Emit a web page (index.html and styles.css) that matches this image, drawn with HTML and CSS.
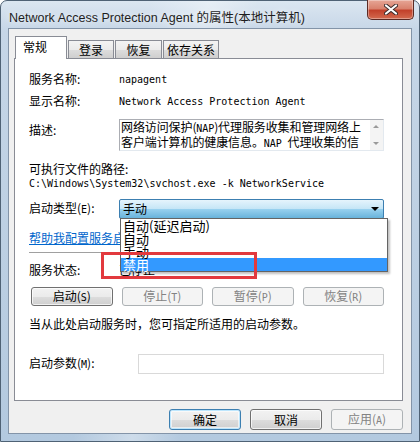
FILE: index.html
```html
<!DOCTYPE html>
<html lang="zh-CN">
<head>
  <meta charset="UTF-8">
  <title>Network Access Protection Agent 的属性(本地计算机)</title>
  <link rel="stylesheet" href="styles.css">
</head>
<body>
  <div class="window">
    <div class="titlebar">
      <span class="title">Network Access Protection Agent 的属性(本地计算机)</span>
      <div class="close">
        <svg width="14" height="11" viewBox="0 0 14 11">
          <path d="M2 1.5 L12 9.5 M12 1.5 L2 9.5" stroke="#3a2a2a" stroke-width="4" stroke-linecap="round"/>
          <path d="M2 1.5 L12 9.5 M12 1.5 L2 9.5" stroke="#ffffff" stroke-width="2.2" stroke-linecap="round"/>
        </svg>
      </div>
    </div>

    <div class="client">
      <div class="tabs">
        <div class="tab active">常规</div>
        <div class="tab">登录</div>
        <div class="tab">恢复</div>
        <div class="tab">依存关系</div>
      </div>

      <div class="panel">
        <div class="row r-name">
          <span class="label">服务名称:</span>
          <span class="mono">napagent</span>
        </div>
        <div class="row r-display">
          <span class="label">显示名称:</span>
          <span class="mono">Network Access Protection Agent</span>
        </div>
        <div class="row r-desc">
          <span class="label">描述:</span>
          <div class="memo">
            <div class="memo-text">
              <div>网络访问保护(<span class="mono">NAP</span>)代理服务收集和管理网络上</div>
              <div>客户端计算机的健康信息。<span class="mono">NAP </span>代理收集的信</div>
            </div>
            <div class="memo-scroll">
              <span class="arrow up"></span>
              <span class="arrow down"></span>
            </div>
          </div>
        </div>
        <div class="line r-pathlabel">可执行文件的路径:</div>
        <div class="line mono r-path">C:\Windows\System32\svchost.exe -k NetworkService</div>

        <div class="row r-type">
          <span class="label">启动类型(<span class="mono">E</span>):</span>
          <div class="combo">
            <span class="combo-value">手动</span>
            <span class="combo-arrow"></span>
            <ul class="droplist">
              <li>自动(延迟启动)</li>
              <li>自动</li>
              <li>手动</li>
              <li class="selected">禁用</li>
            </ul>
          </div>
        </div>

        <div class="line r-link"><a href="#" class="link">帮助我配置服务启动选项。</a></div>
        <div class="separator"></div>

        <div class="row r-status">
          <span class="label">服务状态:</span>
          <span class="status">已停止</span>
        </div>

        <div class="actions">
          <button class="btn">启动(<span class="mono">S</span>)</button>
          <button class="btn" disabled>停止(<span class="mono">T</span>)</button>
          <button class="btn" disabled>暂停(<span class="mono">P</span>)</button>
          <button class="btn" disabled>恢复(<span class="mono">R</span>)</button>
        </div>

        <div class="line r-hint">当从此处启动服务时，您可指定所适用的启动参数。</div>

        <div class="row r-params">
          <span class="label wide">启动参数(<span class="mono">M</span>):</span>
          <div class="field" aria-disabled="true"></div>
        </div>

        <div class="marker"></div>
      </div>

      <div class="footer">
        <button class="btn default">确定</button>
        <button class="btn">取消</button>
        <button class="btn" disabled>应用(<span class="mono">A</span>)</button>
      </div>
    </div>
  </div>
</body>
</html>
```

FILE: styles.css
```css
* {
  box-sizing: border-box;
}

body {
  margin: 0;
  width: 420px;
  height: 442px;
  overflow: hidden;
  font-family: "Noto Sans CJK SC", "Noto Sans", sans-serif;
  font-size: 12px;
  color: #000;
}

.mono {
  font-family: "DejaVu Sans Mono", "Liberation Mono", monospace;
  font-size: 10px;
}

/* Aero frame */
.window {
  width: 420px;
  height: 442px;
  padding: 0 7px 7px 7px;
  border: 1px solid #4f6275;
  border-radius: 7px 7px 0 0;
  background:
    linear-gradient(100deg, rgba(255,255,255,0) 30%, rgba(255,255,255,0.35) 42%, rgba(255,255,255,0) 52%),
    linear-gradient(to bottom, #dbe6f1 0, #c6d6e7 30px, #b3c9df 100%);
  display: flex;
  flex-direction: column;
}

.titlebar {
  height: 27px;
  display: flex;
  align-items: center;
  position: relative;
}

.title {
  padding-left: 1px;
  padding-top: 3px;
  font-family: "Liberation Sans", "Noto Sans CJK SC", sans-serif;
  font-size: 12.5px;
  color: #1e1e1e;
  text-shadow: 0 0 6px rgba(255,255,255,0.9);
}

.close {
  position: absolute;
  top: -1px;
  right: -2px;
  width: 47px;
  height: 20px;
  border: 1px solid #5b2a24;
  border-top: none;
  border-radius: 0 0 5px 5px;
  background: linear-gradient(to bottom, #e6a696 0, #d9826e 45%, #c2412b 55%, #d36a4f 100%);
  box-shadow: inset 0 0 0 1px rgba(255,255,255,0.35);
  display: flex;
  align-items: center;
  justify-content: center;
}

.client {
  flex: 1;
  background: #f0f0f0;
  border: 1px solid #8394a8;
  padding: 7px 8px 0 5px;
  position: relative;
}

/* Tabs */
.tabs {
  display: flex;
  align-items: flex-end;
  height: 22px;
  padding-left: 1px;
  position: relative;
  z-index: 1;
}

.tab {
  height: 18px;
  padding: 0;
  margin-right: 1px;
  border: 1px solid #898c95;
  border-bottom: none;
  background: linear-gradient(to bottom, #f3f3f3 0, #ebebeb 50%, #dddddd 51%, #cfcfcf 100%);
  line-height: 17px;
  text-align: center;
  white-space: nowrap;
}

.tab:nth-child(2) { width: 46px; }
.tab:nth-child(3) { width: 47px; }
.tab:nth-child(4) { width: 56px; }

.tab.active {
  width: 52px;
  height: 23px;
  margin-bottom: -1px;
  padding: 0 0 0 7px;
  background: #fff;
  line-height: 19px;
  text-align: left;
}

.panel {
  height: 343px;
  background: #fff;
  border: 1px solid #898c95;
  padding: 9px 18px 0 14px;
  position: relative;
}

.row {
  display: flex;
  align-items: center;
}

.label {
  width: 90px;
  flex: none;
  line-height: 14px;
}

.label.wide {
  width: 109px;
}

.r-name,
.r-display {
  height: 22px;
}

.r-desc {
  margin-top: 7px;
  align-items: flex-start;
}

.r-desc .label {
  margin-top: 4px;
}

.memo {
  width: 267px;
  height: 32px;
  border: 1px solid #abadb3;
  border-right-color: #e3e9ef;
  border-bottom-color: #e3e9ef;
  display: flex;
}

.memo-text {
  flex: 1;
  padding: 0 2px 0 1px;
  line-height: 13px;
  letter-spacing: -0.1px;
  white-space: nowrap;
}

.memo-scroll {
  width: 13px;
  background: #f4f4f4;
  position: relative;
}

.arrow {
  position: absolute;
  left: 3px;
  width: 0;
  height: 0;
  border-left: 3px solid transparent;
  border-right: 3px solid transparent;
}

.arrow.up {
  top: 5px;
  border-bottom: 3px solid #9a9a9a;
}

.arrow.down {
  bottom: 5px;
  border-top: 3px solid #9a9a9a;
}

.line {
  line-height: 14px;
}

.r-pathlabel {
  margin-top: 10px;
  line-height: 16px;
}

.r-path {
  height: 14px;
}

.r-type {
  margin-top: 8px;
}

/* Opened drop-down combo */
.combo {
  width: 267px;
  height: 20px;
  border: 1px solid #3c7fb1;
  border-radius: 2px;
  background: linear-gradient(to bottom, #e5f4fc 0, #c4e5f6 50%, #98d1ef 51%, #68b3db 100%);
  display: flex;
  align-items: center;
  padding-left: 3px;
  position: relative;
}

.combo-value {
  flex: 1;
  line-height: 14px;
}

.combo-arrow {
  width: 0;
  height: 0;
  margin-right: 4px;
  border-left: 4px solid transparent;
  border-right: 4px solid transparent;
  border-top: 4px solid #000;
}

.droplist {
  position: absolute;
  left: 0;
  top: 18px;
  width: 268px;
  margin: 0;
  padding: 0;
  list-style: none;
  background: #fff;
  border: 1px solid #646464;
  box-shadow: 2px 2px 2px rgba(0,0,0,0.25);
  z-index: 2;
}

.droplist li {
  height: 13px;
  padding-left: 2px;
  line-height: 13px;
  font-size: 13px;
}

.droplist li.selected {
  background: #3399ff;
  color: #fff;
}

.r-link {
  margin-top: 12px;
}

.link {
  color: #0066cc;
  text-decoration: underline;
}

.separator {
  margin-top: 7px;
  height: 2px;
  border-top: 1px solid #a0a0a0;
  border-bottom: 1px solid #fff;
}

.r-status {
  margin-top: 9px;
  height: 14px;
}

.status {
  line-height: 14px;
}

.actions {
  margin-top: 10px;
  display: flex;
  gap: 9px;
  padding-left: 2px;
}

.btn {
  width: 82px;
  height: 19px;
  padding: 0;
  border: 1px solid #707070;
  border-radius: 3px;
  background: linear-gradient(to bottom, #f2f2f2 0, #ebebeb 50%, #dddddd 51%, #cfcfcf 100%);
  box-shadow: inset 0 0 0 1px rgba(255,255,255,0.7);
  font-family: "Noto Sans CJK SC", "Noto Sans", sans-serif;
  font-size: 12px;
  line-height: 14px;
  color: #000;
}

.btn:disabled {
  border-color: #adb2b5;
  background: #f4f4f4;
  box-shadow: none;
  color: #838383;
}

.r-hint {
  margin-top: 11px;
}

.r-params {
  margin-top: 23px;
}

.field {
  width: 248px;
  height: 20px;
  border: 1px solid #d9d9d9;
  background: #fff;
}

/* Red annotation frame around the "disabled" option */
.marker {
  position: absolute;
  left: 86px;
  top: 193px;
  width: 156px;
  height: 27px;
  border: 3px solid #e2393e;
  z-index: 3;
}

.footer {
  display: flex;
  justify-content: flex-end;
  gap: 9px;
  margin-top: 8px;
}

.footer .btn {
  width: 72px;
  height: 21px;
}

.btn.default {
  border-color: #3c7fb1;
  box-shadow: inset 0 0 0 1px #bde6fd, inset 0 0 0 2px rgba(255,255,255,0.6);
}
```
